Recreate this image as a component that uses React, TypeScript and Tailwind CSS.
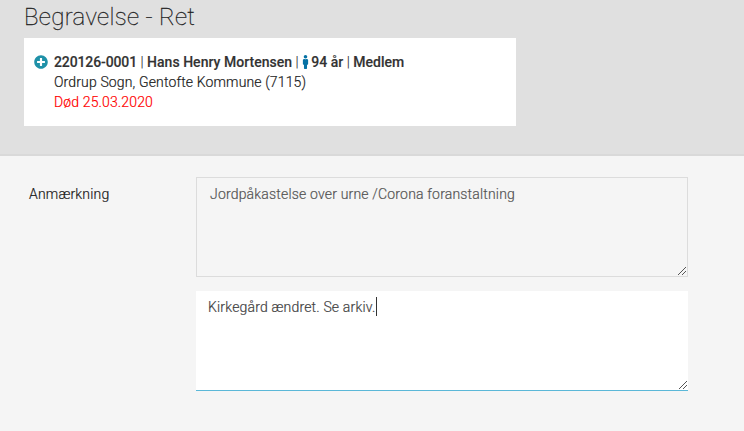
import { ReactNode } from "react";
import { FaMale, FaPlusCircle } from "react-icons/fa";

interface NoteFieldProps {
  children: ReactNode;
  className: string;
}

function ResizeGrip() {
  return (
    <svg
      viewBox="0 0 9 9"
      className="absolute right-0 bottom-px h-[9px] w-[9px]"
      fill="#555"
      shapeRendering="crispEdges"
    >
      {[0, 1, 2, 3, 4, 5, 6, 7].map((i) => (
        <rect key={i} x={i} y={8 - i} width="1" height="1" />
      ))}
      {[4, 5, 6, 7].map((i) => (
        <rect key={i} x={i} y={12 - i} width="1" height="1" />
      ))}
    </svg>
  );
}

function NoteField({ children, className }: NoteFieldProps) {
  return (
    <div className={`relative h-[100px] w-[492px] ${className}`}>
      {children}
      <ResizeGrip />
    </div>
  );
}

function Separator() {
  return <span className="font-light whitespace-pre"> | </span>;
}

function PersonCard() {
  return (
    <section className="flex h-[88px] w-[492px] gap-[6px] bg-white pt-[14px] pl-[10px]">
      <FaPlusCircle className="mt-[3px] h-[14px] w-[14px] shrink-0 text-[#1f91a8]" />
      <div className="leading-5 tracking-[0.14px]">
        <div className="flex font-medium tracking-[0.03px] text-[#333] [-webkit-text-stroke:0.15px]">
          <span className="tracking-[-0.12px]">220126-0001</span>
          <Separator />
          <span>Hans Henry Mortensen</span>
          <Separator />
          <FaMale className="mt-[3px] mr-[2px] h-[14px] w-[7px] text-[#0672a5]" />
          <span>94 år</span>
          <Separator />
          <span>Medlem</span>
        </div>
        <p>Ordrup Sogn, Gentofte Kommune (7115)</p>
        <p className="text-[#f00]">Død 25.03.2020</p>
      </div>
    </section>
  );
}

export default function App() {
  return (
    <div className="h-[431px] w-[744px] overflow-hidden bg-[#f5f5f5] font-['Roboto',sans-serif] text-[14px] font-light text-[#222] [-webkit-text-stroke:0.2px]">
      <header className="h-[156px] border-b-2 border-[#d9d9d9] bg-[#e0e0e0] pl-6">
        <h1 className="h-[38px] pt-px text-[24px] leading-[32px] font-thin tracking-[0.32px] [-webkit-text-stroke:0.3px]">
          Begravelse - Ret
        </h1>
        <PersonCard />
      </header>

      <main className="flex pt-[21px] pl-[29px] tracking-[0.18px]">
        <label className="w-[167px] pt-[7px] leading-5">Anmærkning</label>
        <div className="flex flex-col gap-[14px]">
          <NoteField className="border border-[#dcdcdc] pt-[6px] pl-[13px] leading-5 text-[#555]">
            Jordpåkastelse over urne /Corona foranstaltning
          </NoteField>
          <NoteField className="border-b border-[#5bb8d8] bg-white pt-[6px] pl-[12px] leading-5 text-[#444]">
            <div className="flex">
              <span>Kirkegård ændret. Se arkiv.</span>
              <span className="h-[19px] w-px bg-[#333]" />
            </div>
          </NoteField>
        </div>
      </main>
    </div>
  );
}
